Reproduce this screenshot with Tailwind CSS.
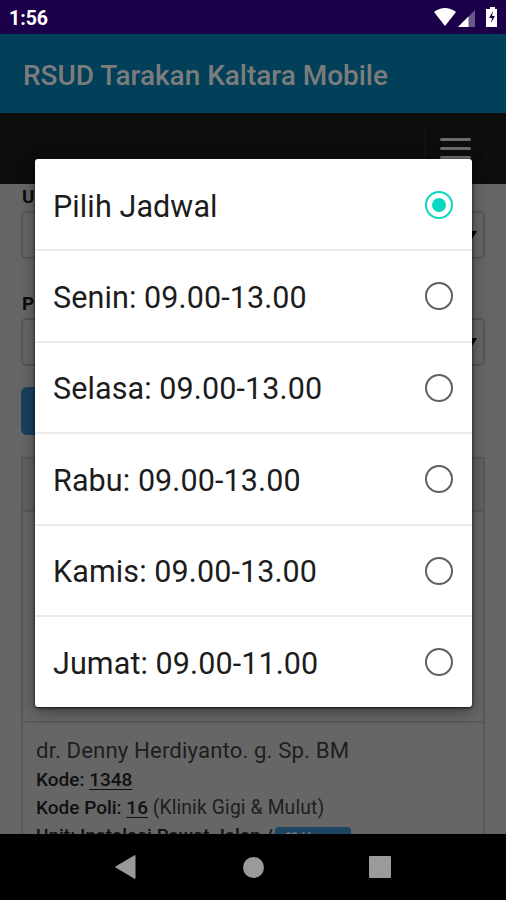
<!DOCTYPE html>
<html lang="id">
<head>
<meta charset="utf-8">
<title>RSUD Tarakan Kaltara Mobile</title>
<script src="https://cdn.jsdelivr.net/npm/@tailwindcss/browser@4"></script>
</head>
<body class="font-['Roboto',sans-serif]">
<div class="relative flex h-[900px] w-[506px] flex-col overflow-hidden bg-[#666] text-black">
  <header class="flex h-[34px] shrink-0 items-center justify-between bg-[#1b0049] pl-[9px] pr-[7px] text-white">
    <span class="pt-[4px] text-[19.500px] leading-none font-bold">1:56</span>
    <svg class="h-[24px] w-[66px]" viewBox="0 0 66 24" fill="#fff">
      <path d="M1 7Q12 -1 23 7L12 21Z"/>
      <path d="M42 5V22H25Z" fill="#68588a"/>
      <path d="M35.500 11.500V22H25Z"/>
      <path d="M55 4h2V2h5v2h2v18H53V4z"/>
      <path d="M60 6l-4 7h3l-1 5 4-7h-3z" fill="#1b0049"/>
    </svg>
  </header>
  <div class="flex h-[79px] shrink-0 items-center bg-[#014058] pt-[4px] pl-[23px]">
    <h1 class="text-[27.950px] leading-none font-medium whitespace-nowrap text-[#7c7c7c]">RSUD Tarakan Kaltara Mobile</h1>
  </div>
  <nav class="flex h-[71px] shrink-0 justify-end bg-[#0d0d0d] pt-[11px] pr-[20px]">
    <div class="flex h-[50px] w-[62px] flex-col items-center gap-[6px] rounded-md border border-[#121212] pt-[13px]">
      <i class="h-[3px] w-[31px] rounded-sm bg-[#6b6b6b]"></i>
      <i class="h-[3px] w-[31px] rounded-sm bg-[#6b6b6b]"></i>
      <i class="h-[3px] w-[31px] rounded-sm bg-[#6b6b6b]"></i>
    </div>
  </nav>
  <main class="flex h-[650px] shrink-0 flex-col overflow-hidden px-[21px]">
    <label class="mt-[3px] h-[24px] shrink-0 pl-px text-[19px] leading-[20px] font-bold text-[#0d0d0d]">Unit</label>
    <div class="flex h-[48px] shrink-0 items-center justify-end rounded-[5px] border-2 border-[#565656] pr-[6px]">
      <svg class="h-2 w-[10px]" viewBox="0 0 10 8"><path d="M0 0h10L5 8z"/></svg>
    </div>
    <label class="mt-[35px] h-[24px] shrink-0 pl-px text-[19px] leading-[20px] font-bold text-[#0d0d0d]">Poli</label>
    <div class="flex h-[48px] shrink-0 items-center justify-end rounded-[5px] border-2 border-[#565656] pr-[6px]">
      <svg class="h-2 w-[10px]" viewBox="0 0 10 8"><path d="M0 0h10L5 8z"/></svg>
    </div>
    <div class="mt-[21px] h-[48px] w-[100px] shrink-0 rounded-[6px] bg-[#17415f]"></div>
    <section class="mt-[22px] flex h-[400px] shrink-0 flex-col border-2 border-[#585858]">
      <div class="h-[53px] shrink-0 border-b-2 border-[#595959] bg-[#626262]"></div>
      <div class="h-[211px] shrink-0 border-b-2 border-[#595959]"></div>
      <div class="pl-[13px] whitespace-nowrap text-[#101010]">
        <p class="mt-[13px] h-[30px] text-[22.200px] leading-[28px] font-normal tracking-[0.120px] text-[#1e1e1e]">dr. Denny Herdiyanto. g. Sp. BM</p>
        <p class="h-[28px] text-[19px] leading-[28px] font-medium">Kode: <u class="underline-offset-[3px]">1348</u></p>
        <p class="h-[28px] text-[19px] leading-[28px] font-medium">Kode Poli: <u class="underline-offset-[3px]">16</u> <span class="text-[19.300px] font-normal tracking-[0.140px] text-[#1e1e1e]">(Klinik Gigi &amp; Mulut)</span></p>
        <p class="flex h-[28px] text-[19px] leading-[28px] font-medium">Unit: Instalasi Rawat Jalan /
          <span class="mt-[5px] ml-[2px] flex h-[21px] w-[76px] items-center gap-[4px] rounded-[4px] bg-[#1b4561] pl-[10px] text-[14px] leading-none text-[#777]"><svg class="h-[12px] w-[13px]" viewBox="0 0 13 12"><path d="M6.500 12L1 6Q-1 2 2 .5 5-.5 6.500 2 8-.5 11 .5 14 2 12 6Z" fill="#777"/></svg>Umum</span></p>
      </div>
    </section>
  </main>
  <footer class="flex h-[66px] shrink-0 items-center bg-black pl-[115px]">
    <svg class="h-[24px] w-[21px]" viewBox="0 0 21 24"><path d="M20 .5V23.500L.5 12Z" fill="#9a9a9a" stroke="#9a9a9a" stroke-linejoin="round"/></svg>
    <i class="ml-[107px] size-[21px] rounded-full bg-[#9a9a9a]"></i>
    <i class="ml-[105px] size-[22px] rounded-[1px] bg-[#9a9a9a]"></i>
  </footer>

  <div class="absolute top-[159px] left-[35px] flex h-[548px] w-[437px] flex-col rounded-[3px] bg-white text-[30.500px] leading-none tracking-[0.100px] whitespace-nowrap text-[#1c1c1c] shadow-[0_4px_16px_rgba(0,0,0,0.4),0_1px_3px_rgba(0,0,0,0.8)]">
    <div class="flex h-[92px] shrink-0 items-center justify-between border-b-2 border-[#ebebeb] pt-[2px] pr-[19px] pl-[18px]"><span class="mt-[4px]">Pilih Jadwal</span><i class="flex size-[28px] items-center justify-center rounded-full border-2 border-[#08d8c0]"><b class="size-[14px] rounded-full bg-[#08d8c0]"></b></i></div>
    <div class="flex h-[92px] shrink-0 items-center justify-between border-b-2 border-[#ebebeb] pr-[19px] pl-[18px]"><span class="mt-[4px]">Senin: 09.00-13.00</span><i class="size-[28px] rounded-full border-2 border-[#606060]"></i></div>
    <div class="flex h-[91px] shrink-0 items-center justify-between border-b-2 border-[#ebebeb] pr-[19px] pl-[18px]"><span class="mt-[4px]">Selasa: 09.00-13.00</span><i class="size-[28px] rounded-full border-2 border-[#606060]"></i></div>
    <div class="flex h-[92px] shrink-0 items-center justify-between border-b-2 border-[#ebebeb] pr-[19px] pl-[18px]"><span class="mt-[4px]">Rabu: 09.00-13.00</span><i class="size-[28px] rounded-full border-2 border-[#606060]"></i></div>
    <div class="flex h-[91px] shrink-0 items-center justify-between border-b-2 border-[#ebebeb] pr-[19px] pl-[18px]"><span class="mt-[4px]">Kamis: 09.00-13.00</span><i class="size-[28px] rounded-full border-2 border-[#606060]"></i></div>
    <div class="flex h-[90px] shrink-0 items-center justify-between pr-[19px] pl-[18px]"><span class="mt-[4px]">Jumat: 09.00-11.00</span><i class="size-[28px] rounded-full border-2 border-[#606060]"></i></div>
  </div>
</div>
</body>
</html>
